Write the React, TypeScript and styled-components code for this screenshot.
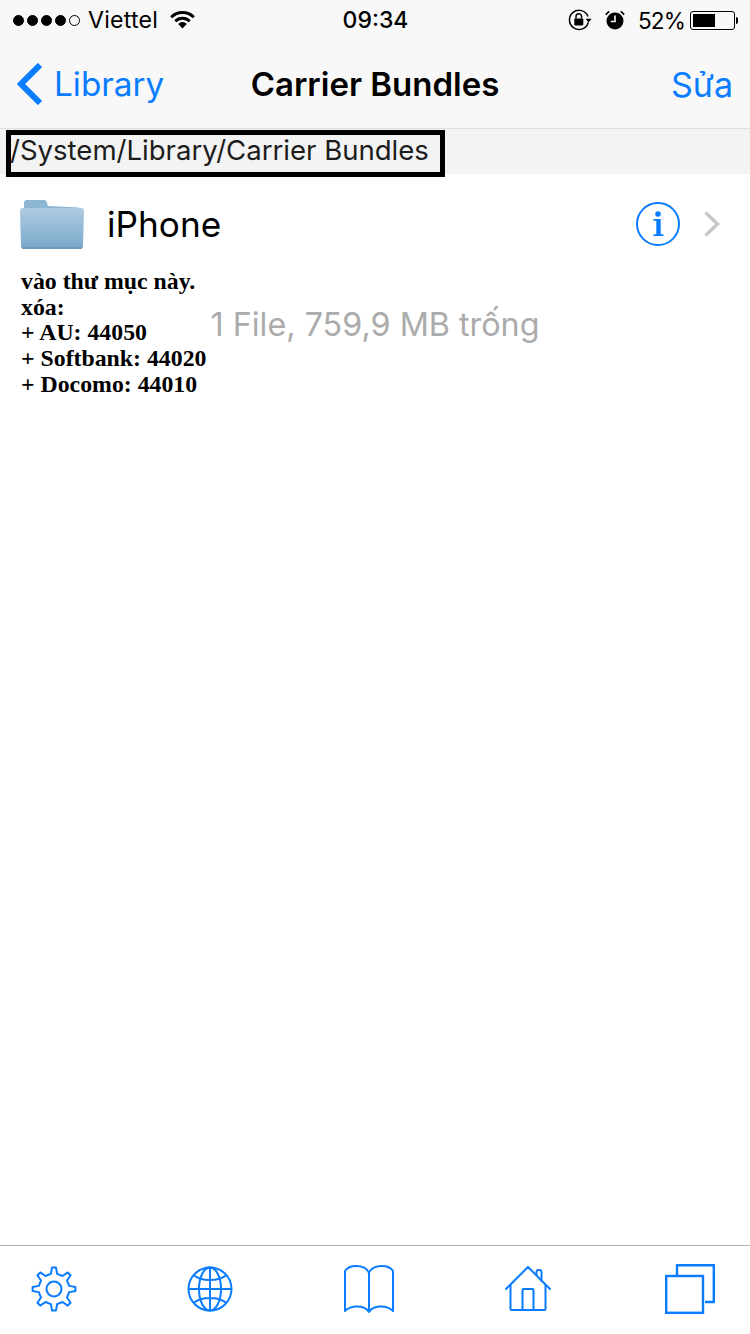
import React from "react";
import styled, { createGlobalStyle } from "styled-components";

const Global = createGlobalStyle`
  html, body { margin: 0; padding: 0; background: #fff; }
  #root { width: 750px; height: 1334px; }
`;

const BLUE = "#0a7cff";
const UI = `Inter, "Noto Sans", "Liberation Sans", sans-serif`;

const Page = styled.div`
  position: relative;
  width: 750px;
  height: 1334px;
  display: flex;
  flex-direction: column;
  overflow: hidden;
  font-family: ${UI};
  background: #fff;
`;

const Header = styled.header`
  background: #f8f8f8;
  border-bottom: 1px solid #dfdfdf;
  height: 128px;
  box-sizing: content-box;
`;

const StatusBar = styled.div`
  height: 40px;
  display: grid;
  grid-template-columns: 1fr auto 1fr;
  align-items: center;
  color: #000;
  padding: 0 12px 0 13px;
`;

const StatusLeft = styled.div`
  display: flex;
  align-items: center;
`;

const StatusRight = styled.div`
  display: flex;
  align-items: center;
  justify-content: flex-end;
`;

const Signal = styled.div`
  display: flex;
  gap: 3px;
  margin-right: 8px;
`;

const Dot = styled.span<{ $on: boolean }>`
  width: 11px;
  height: 11px;
  box-sizing: border-box;
  border-radius: 50%;
  border: 1px solid #000;
  background: ${(p) => (p.$on ? "#000" : "transparent")};
`;

const Carrier = styled.span`
  font-size: 23.2px;
  letter-spacing: 0.2px;
  margin-right: 12px;
`;

const Clock = styled.span`
  font-size: 23px;
  font-weight: 500;
`;

const Percent = styled.span`
  font-size: 22.6px;
  letter-spacing: -0.9px;
  margin: 0 5px 0 13px;
`;

const AlarmSlot = styled.span`
  display: flex;
  margin-left: 13px;
`;

const Battery = styled.div`
  display: flex;
  align-items: center;
`;

const BatteryShell = styled.div`
  width: 45px;
  height: 19px;
  box-sizing: border-box;
  border: 1px solid #000;
  border-radius: 3px;
  padding: 2px;
`;

const BatteryFill = styled.div`
  height: 100%;
  background: #000;
`;

const BatteryTip = styled.div`
  width: 2px;
  height: 7px;
  margin-left: 1px;
  background: #000;
  border-radius: 0 2px 2px 0;
`;

const NavBar = styled.nav`
  height: 88px;
  display: grid;
  grid-template-columns: 1fr auto 1fr;
  align-items: center;
  padding: 0 17px;
`;

const BackLink = styled.div`
  display: flex;
  align-items: center;
  gap: 12px;
  color: ${BLUE};
  font-size: 33.3px;
`;

const NavTitle = styled.h1`
  margin: 0;
  font-size: 33px;
  font-weight: 600;
  color: #000;
`;

const EditLink = styled.div`
  justify-self: end;
  color: ${BLUE};
  font-size: 34px;
`;

const PathBar = styled.div`
  position: relative;
  height: 45px;
  box-sizing: border-box;
  background: #f3f3f3;
  display: flex;
  align-items: center;
  padding: 0 0 3px 10px;
  font-size: 27.55px;
  color: #1c1c1c;
`;

const Highlight = styled.div`
  position: absolute;
  left: 6px;
  top: 1px;
  width: 439px;
  height: 47px;
  box-sizing: border-box;
  border: 5px solid #000;
`;

const Row = styled.div`
  height: 100px;
  display: flex;
  align-items: center;
  padding: 0 30px 0 20px;
`;

const RowName = styled.span`
  margin: 0 0 1px 23px;
  font-size: 35.2px;
  color: #000;
  flex: 1;
`;

const Message = styled.div`
  margin-top: 30px;
  text-align: center;
  font-size: 32.3px;
  line-height: 42px;
  color: #ababab;
`;

const Spacer = styled.div`
  flex: 1;
`;

const Notes = styled.div`
  position: absolute;
  left: 21px;
  top: 269px;
  font-family: "Liberation Serif", "Times New Roman", serif;
  font-weight: 700;
  font-size: 23.8px;
  line-height: 25.7px;
  color: #000;
`;

const TabBar = styled.footer`
  height: 89px;
  box-sizing: border-box;
  border-top: 1px solid #b2b2b2;
  padding-bottom: 2px;
  display: grid;
  grid-template-columns: 108px 204px 114px 204px 120px;
  align-items: center;
  justify-items: center;
`;

const gearPath = (() => {
  const cx = 24, cy = 24, teeth = 8, R = 21.5, r = 15.5;
  const pts: string[] = [];
  for (let i = 0; i < teeth; i++) {
    const a = (i * 2 * Math.PI) / teeth - Math.PI / 2;
    const step = (2 * Math.PI) / teeth;
    const list: [number, number][] = [
      [r, a - step * 0.26],
      [R, a - step * 0.12],
      [R, a + step * 0.12],
      [r, a + step * 0.26],
    ];
    list.forEach(([rad, ang]) => {
      const x = cx + rad * Math.cos(ang);
      const y = cy + rad * Math.sin(ang);
      pts.push(`${x.toFixed(2)} ${y.toFixed(2)}`);
    });
  }
  return "M" + pts.join("L") + "Z";
})();

const Wifi = () => (
  <svg width="25" height="18" viewBox="0 0 25 18" fill="none" stroke="#000" strokeWidth="3">
    <path d="M1.2 6.2a16 16 0 0 1 22.6 0" />
    <path d="M5.3 10.3a10.2 10.2 0 0 1 14.4 0" />
    <path d="M12.5 17.5 8.2 12.9a6 6 0 0 1 8.6 0Z" fill="#000" stroke="none" />
  </svg>
);

const RotationLock = () => (
  <svg width="24" height="22" viewBox="0 0 24 22" fill="none">
    <path d="M20.3 13.5A9.6 9.6 0 1 1 20 7.4" stroke="#000" strokeWidth="1.5" />
    <path d="M17.6 9.8h6l-3 3.6Z" fill="#000" />
    <rect x="6.3" y="9.4" width="9" height="7" rx="0.8" fill="#000" />
    <path d="M8 9.6V7.6a2.8 2.8 0 0 1 5.6 0v2" stroke="#000" strokeWidth="1.5" />
  </svg>
);

const Alarm = () => (
  <svg width="20" height="20" viewBox="0 0 20 20" fill="none">
    <circle cx="10" cy="11" r="8.5" fill="#000" />
    <path d="M10 5.500V11.500H5.800" stroke="#f8f8f8" strokeWidth="1.6" />
    <path d="M0.800 4.600 4.200 1.400M19.200 4.600 15.800 1.400" stroke="#000" strokeWidth="1.6" />
  </svg>
);

const BackChevron = () => (
  <svg width="25" height="42" viewBox="0 0 25 42" fill="none" stroke={BLUE} strokeWidth="6">
    <path d="M23 2 4 21l19 19" />
  </svg>
);

const FolderIcon = () => (
  <svg width="64" height="49" viewBox="0 0 64 49">
    <defs>
      <linearGradient id="folderBody" x1="0" y1="0" x2="0" y2="1">
        <stop offset="0" stopColor="#aecbe1" />
        <stop offset="1" stopColor="#7aa7cb" />
      </linearGradient>
    </defs>
    <path d="M4 3a3 3 0 0 1 3-3h17a3 3 0 0 1 3 3l1 3 31 1.500V10H4Z" fill="#8db5d4" />
    <path d="M0 11a3 3 0 0 1 3-3h58a3 3 0 0 1 3 3l-1 35a3 3 0 0 1-3 3H4a3 3 0 0 1-3-3Z" fill="url(#folderBody)" />
    <path d="M2 48h60" stroke="#6890b2" strokeWidth="1.500" opacity="0.8" />
  </svg>
);

const InfoIcon = () => (
  <svg width="44" height="44" viewBox="0 0 44 44" fill="none">
    <circle cx="22" cy="22" r="21" stroke={BLUE} strokeWidth="2" />
    <circle cx="22" cy="12" r="2.800" fill={BLUE} />
    <path d="M17.500 17h7.200v15.200h2.800V34H17.500v-1.800h2.800V18.800h-2.800Z" fill={BLUE} />
  </svg>
);

const RowChevron = () => (
  <svg width="18" height="26" viewBox="0 0 18 26" fill="none" stroke="#c8c8cc" strokeWidth="3.600">
    <path d="M3.500 1.500l12 11.500-12 11.500" />
  </svg>
);

const InfoSlot = styled.div`
  display: flex;
  margin-right: 22px;
`;

const iconProps = { fill: "none", stroke: BLUE, strokeWidth: 2 };

const GearIcon = () => (
  <svg width="48" height="48" viewBox="0 0 48 48" {...iconProps}>
    <path d={gearPath} strokeLinejoin="round" />
    <circle cx="24" cy="24" r="7.500" />
  </svg>
);

const GlobeIcon = () => (
  <svg width="46" height="46" viewBox="0 0 46 46" {...iconProps}>
    <circle cx="23" cy="23" r="21.500" />
    <ellipse cx="23" cy="23" rx="11" ry="21.500" />
    <path d="M23 1.500v43M1.500 23h43M6.500 9c4 3.400 10 5 16.500 5s12.500-1.600 16.500-5M6.500 37c4-3.400 10-5 16.500-5s12.500 1.600 16.500 5" />
  </svg>
);

const BookIcon = () => (
  <svg width="50" height="48" viewBox="0 0 50 48" {...iconProps}>
    <path d="M25 8C23 3 18 1 12 1 7 1 3 3 1 6v40c3-3 7-4.500 12-4.500 5 0 9.500 1.500 12 5.500 2.500-4 7-5.500 12-5.500 5 0 9 1.500 12 4.500V6c-2-3-6-5-11-5-6 0-11 2-13 7Zm0 0v39" strokeLinejoin="round" />
  </svg>
);

const HomeIcon = () => (
  <svg width="46" height="46" viewBox="0 0 46 46" {...iconProps}>
    <path d="M1 23 23 1l22 22" strokeLinecap="round" strokeLinejoin="round" />
    <path d="M5.500 19v24a1 1 0 0 0 1 1h33a1 1 0 0 0 1-1V19" />
    <path d="M17.500 44V24a1 1 0 0 1 1-1h9a1 1 0 0 1 1 1v20" />
    <path d="M31.500 10V6a2 2 0 0 1 2-2h1a2 2 0 0 1 2 2v10" />
  </svg>
);

const TabsIcon = () => (
  <svg width="50" height="50" viewBox="0 0 50 50" fill="none" stroke={BLUE} strokeWidth="2.400">
    <path d="M12 12V1.200h36.800V38H40" />
    <rect x="1.200" y="12" width="36.800" height="36.800" />
  </svg>
);

const notes = ["vào thư mục này.", "xóa:", "+ AU: 44050", "+ Softbank: 44020", "+ Docomo: 44010"];

export default function App() {
  return (
    <Page>
      <Global />
      <Header>
        <StatusBar>
          <StatusLeft>
            <Signal>
              {[1, 2, 3, 4, 5].map((n) => (
                <Dot key={n} $on={n < 5} />
              ))}
            </Signal>
            <Carrier>Viettel</Carrier>
            <Wifi />
          </StatusLeft>
          <Clock>09:34</Clock>
          <StatusRight>
            <RotationLock />
            <AlarmSlot>
              <Alarm />
            </AlarmSlot>
            <Percent>52%</Percent>
            <Battery>
              <BatteryShell>
                <BatteryFill style={{ width: "56%" }} />
              </BatteryShell>
              <BatteryTip />
            </Battery>
          </StatusRight>
        </StatusBar>
        <NavBar>
          <BackLink>
            <BackChevron />
            Library
          </BackLink>
          <NavTitle>Carrier Bundles</NavTitle>
          <EditLink>Sửa</EditLink>
        </NavBar>
      </Header>
      <PathBar>
        /System/Library/Carrier Bundles
        <Highlight />
      </PathBar>
      <Row>
        <FolderIcon />
        <RowName>iPhone</RowName>
        <InfoSlot>
          <InfoIcon />
        </InfoSlot>
        <RowChevron />
      </Row>
      <Message>1 File, 759,9 MB trống</Message>
      <Spacer />
      <TabBar>
        <GearIcon />
        <GlobeIcon />
        <BookIcon />
        <HomeIcon />
        <TabsIcon />
      </TabBar>
      <Notes>
        {notes.map((n) => (
          <div key={n}>{n}</div>
        ))}
      </Notes>
    </Page>
  );
}
